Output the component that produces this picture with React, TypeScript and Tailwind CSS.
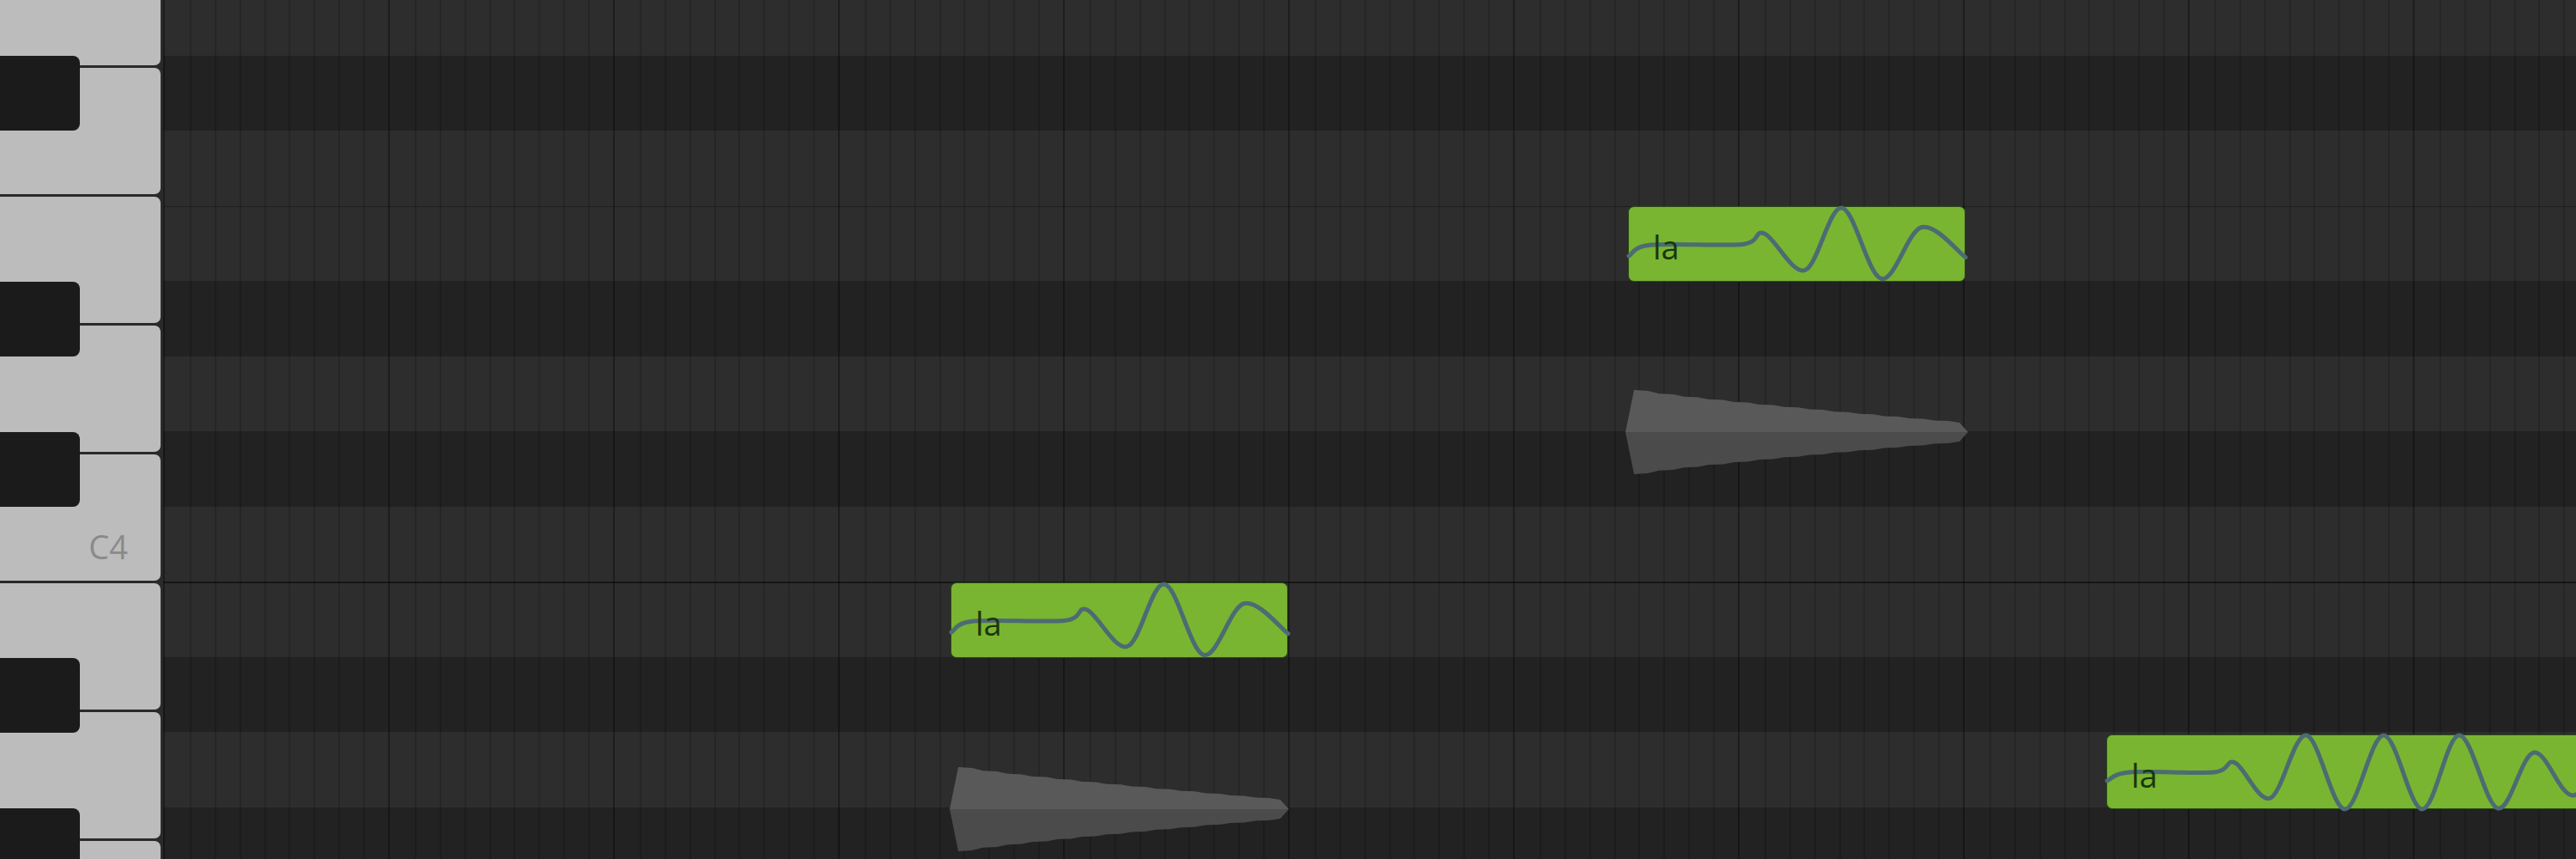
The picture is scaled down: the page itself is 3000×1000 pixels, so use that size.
import React from "react";

type Row = { name: string; cls: string };

const ROWS: Row[] = [
  { name: "G4", cls: "h-[87.5px] shrink-0 bg-[#2d2d2d]" },
  { name: "F#4", cls: "h-[87.5px] shrink-0 bg-[#222222]" },
  { name: "F4", cls: "h-[87.5px] shrink-0 bg-[#2d2d2d]" },
  { name: "E4", cls: "h-[87.5px] shrink-0 bg-[#2d2d2d] border-t border-black/30" },
  { name: "D#4", cls: "h-[87.5px] shrink-0 bg-[#222222]" },
  { name: "D4", cls: "h-[87.5px] shrink-0 bg-[#2d2d2d]" },
  { name: "C#4", cls: "h-[87.5px] shrink-0 bg-[#222222]" },
  { name: "C4", cls: "h-[87.5px] shrink-0 bg-[#2d2d2d]" },
  { name: "B3", cls: "h-[87.5px] shrink-0 bg-[#2d2d2d] border-t-2 border-black/50" },
  { name: "A#3", cls: "h-[87.5px] shrink-0 bg-[#222222]" },
  { name: "A3", cls: "h-[87.5px] shrink-0 bg-[#2d2d2d]" },
  { name: "G#3", cls: "h-[87.5px] shrink-0 bg-[#222222]" },
];

const WHITE_KEYS = ["G4", "F4", "E4", "D4", "C4", "B3", "A3", "G3"];

const BLACK_KEYS = [
  "absolute left-0 top-[65px] h-[87px] w-[93px] rounded-r-[8px] bg-[#1b1b1b]",
  "absolute left-0 top-[328px] h-[87px] w-[93px] rounded-r-[8px] bg-[#1b1b1b]",
  "absolute left-0 top-[503px] h-[87px] w-[93px] rounded-r-[8px] bg-[#1b1b1b]",
  "absolute left-0 top-[766px] h-[87px] w-[93px] rounded-r-[8px] bg-[#1b1b1b]",
  "absolute left-0 top-[941px] h-[87px] w-[93px] rounded-r-[8px] bg-[#1b1b1b]",
];

type Pt = [number, number];

function smoothPath(pts: Pt[]): string {
  let d = `M ${pts[0][0]} ${pts[0][1]}`;
  for (let i = 0; i < pts.length - 1; i++) {
    const p0 = pts[i - 1] || pts[i];
    const p1 = pts[i];
    const p2 = pts[i + 1];
    const p3 = pts[i + 2] || p2;
    const c1x = p1[0] + (p2[0] - p0[0]) / 6;
    const c1y = p1[1] + (p2[1] - p0[1]) / 6;
    const c2x = p2[0] - (p3[0] - p1[0]) / 6;
    const c2y = p2[1] - (p3[1] - p1[1]) / 6;
    d += ` C ${c1x.toFixed(1)} ${c1y.toFixed(1)} ${c2x.toFixed(1)} ${c2y.toFixed(1)} ${p2[0]} ${p2[1]}`;
  }
  return d;
}

const SHORT_CURVE: Pt[] = [
  [0, 57],
  [26, 44],
  [132, 43.5],
  [158, 31],
  [205, 73.5],
  [248, 1],
  [294, 83.5],
  [341, 23.5],
  [392, 58.5],
];

const LONG_CURVE: Pt[] = [
  [0, 53],
  [27, 43],
  [124, 43],
  [149, 32],
  [190, 73],
  [232, 0],
  [277, 86],
  [322, 0],
  [367, 86],
  [410, 0],
  [455, 85],
  [497, 20],
  [542, 70],
  [587, 20],
  [632, 70],
];

function envelopePolys(w: number): { top: string; bottom: string } {
  const inner = w - 20;
  const steps = Math.max(2, Math.round(inner / 29));
  const topPts: Pt[] = [[0, 50], [10, 1]];
  for (let i = 0; i < steps; i++) {
    const x0 = 10 + (i * inner) / steps;
    const x1 = 10 + ((i + 1) * inner) / steps;
    const t0 = i / steps;
    const t1 = (i + 1) / steps;
    const y0 = 1 + 38 * Math.pow(t0, 0.85);
    const y1 = 1 + 38 * Math.pow(t1, 0.85);
    topPts.push([x0 + (x1 - x0) * 0.55, y0 + (y1 - y0) * 0.2]);
    topPts.push([x1, y1]);
  }
  topPts.push([w, 50]);
  const top = topPts.map((p) => `${p[0].toFixed(1)},${p[1].toFixed(1)}`).join(" ");
  const bottom = topPts
    .map((p) => `${p[0].toFixed(1)},${(100 - p[1]).toFixed(1)}`)
    .join(" ");
  return { top, bottom };
}

function Envelope({ cls, w }: { cls: string; w: number }) {
  const { top, bottom } = envelopePolys(w);
  return (
    <svg className={cls} width={w} height={100} viewBox={`0 0 ${w} 100`}>
      <polygon points={top} fill="#595959" />
      <polygon points={bottom} fill="#4b4b4b" />
    </svg>
  );
}

function Note({ cls, w, pts }: { cls: string; w: number; pts: Pt[] }) {
  return (
    <div className={cls}>
      <svg
        className="absolute left-0 top-0 overflow-visible"
        width={w}
        height={88}
        viewBox={`0 0 ${w} 88`}
      >
        <path
          d={smoothPath(pts)}
          fill="none"
          stroke="#4d6b73"
          strokeWidth={5}
          strokeLinecap="round"
          strokeLinejoin="round"
        />
      </svg>
      <span className="relative pl-[28px] pt-[6px] text-[38px] font-medium leading-none text-[#1a360c]">
        la
      </span>
    </div>
  );
}

function Keyboard() {
  return (
    <div className="relative h-full w-[190px] shrink-0 overflow-hidden bg-[#2a2a2a]">
      <div className="mt-[-71.5px] flex w-[187px] flex-col gap-[3px]">
        {WHITE_KEYS.map((k) => (
          <div
            key={k}
            className="flex h-[147px] shrink-0 items-end justify-end rounded-r-[7px] bg-[#bcbcbc] pb-[21px] pr-[38px]"
          >
            {k === "C4" ? (
              <span className="text-[38px] leading-none text-[#8a8a8a]">C4</span>
            ) : null}
          </div>
        ))}
      </div>
      {BLACK_KEYS.map((c, i) => (
        <div key={i} className={c} />
      ))}
    </div>
  );
}

function Grid() {
  const beats = Array.from({ length: 11 }, (_, i) => i);
  const subs = Array.from({ length: 9 }, (_, i) => i);
  return (
    <div className="relative h-full flex-1 overflow-hidden">
      <div className="mt-[-23px] flex flex-col">
        {ROWS.map((r) => (
          <div key={r.name} className={r.cls} />
        ))}
      </div>
      <div className="pointer-events-none absolute inset-0 flex">
        {beats.map((b) => (
          <div
            key={b}
            className="grid h-full w-[262px] shrink-0 grid-cols-9 border-l-2 border-black/35"
          >
            {subs.map((s) =>
              s === 0 ? (
                <div key={s} className="h-full" />
              ) : (
                <div key={s} className="h-full border-l-2 border-black/15" />
              )
            )}
          </div>
        ))}
      </div>

      <Envelope cls="absolute left-[1703px] top-[453px]" w={399} />
      <Envelope cls="absolute left-[916px] top-[892px]" w={395} />

      <Note
        cls="absolute left-[1706px] top-[240px] flex h-[88px] w-[393px] items-center overflow-visible rounded-[7px] border border-[#2c4a14] bg-[#79b531]"
        w={393}
        pts={SHORT_CURVE}
      />
      <Note
        cls="absolute left-[917px] top-[678px] flex h-[88px] w-[393px] items-center overflow-visible rounded-[7px] border border-[#2c4a14] bg-[#79b531]"
        w={393}
        pts={SHORT_CURVE}
      />
      <Note
        cls="absolute left-[2263px] top-[855px] flex h-[87px] w-[800px] items-center overflow-visible rounded-[7px] border border-[#2c4a14] bg-[#79b531]"
        w={800}
        pts={LONG_CURVE}
      />
    </div>
  );
}

export default function App() {
  return (
    <div className="flex h-[1000px] w-[3000px] overflow-hidden bg-[#2a2a2a] font-['Open_Sans',sans-serif]">
      <Keyboard />
      <Grid />
    </div>
  );
}
